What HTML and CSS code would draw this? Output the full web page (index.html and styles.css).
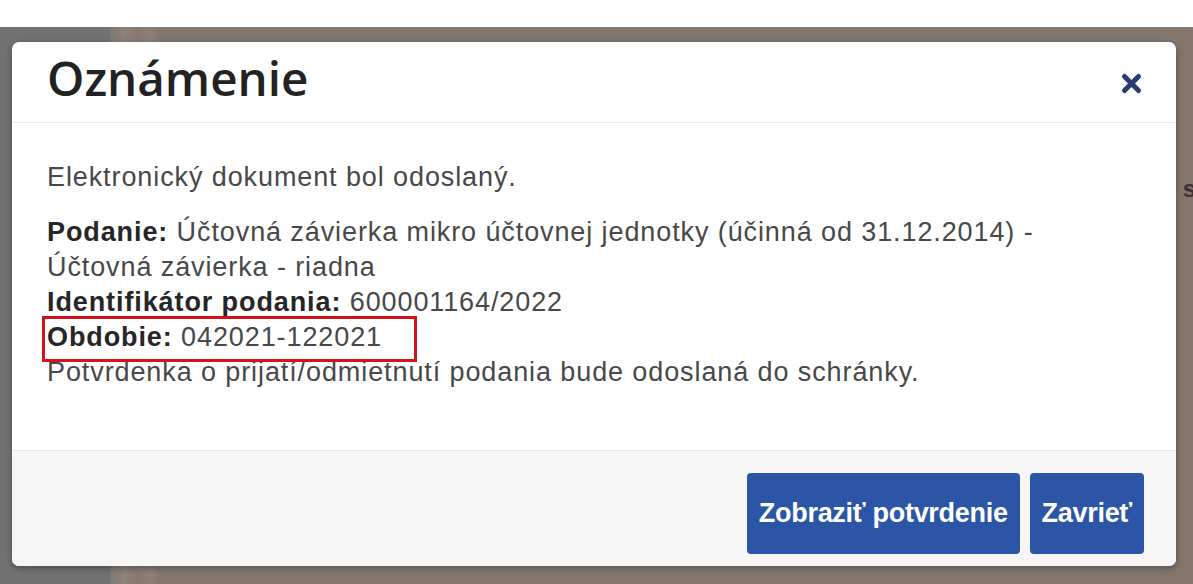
FILE: index.html
```html
<!DOCTYPE html>
<html lang="sk">
<head>
    <meta charset="UTF-8">
    <meta name="viewport" content="width=device-width, initial-scale=1.0">
    <title>Oznámenie</title>
    <link rel="stylesheet" href="styles.css">
</head>
<body>
    <div class="page-top"></div>
    <div class="backdrop">
        <div class="bg-side"></div>
        <div class="bg-edge"></div>
        <div class="bg-main"><span class="bg-letter">s</span></div>
    </div>

    <div class="modal">
        <div class="modal-header">
            <h1>Oznámenie</h1>
            <button type="button" class="close" aria-label="Zavrieť">
                <svg width="23" height="23" viewBox="0 0 23 23">
                    <path d="M4.5 4.5 L18.5 18.5 M18.5 4.5 L4.5 18.5" stroke="#2b3a73" stroke-width="5" stroke-linecap="round" fill="none"/>
                </svg>
            </button>
        </div>

        <div class="modal-body">
            <p>Elektronický dokument bol odoslaný.</p>
            <p>
                <b>Podanie:</b> Účtovná závierka mikro účtovnej jednotky (účinná od 31.12.2014) -<br>
                Účtovná závierka - riadna<br>
                <b>Identifikátor podania:</b> 600001164/2022<br>
                <span class="marked"><b>Obdobie:</b> 042021-122021</span><br>
                Potvrdenka o prijatí/odmietnutí podania bude odoslaná do schránky.
            </p>
        </div>

        <div class="modal-footer">
            <button type="button" class="btn">Zobraziť potvrdenie</button>
            <button type="button" class="btn">Zavrieť</button>
        </div>
    </div>
</body>
</html>
```

FILE: styles.css
```css
body {
    margin: 0;
    padding: 0;
    height: 584px;
    overflow: hidden;
    position: relative;
    display: flex;
    flex-direction: column;
    font-family: 'Liberation Sans', Arial, sans-serif;
    background: #fff;
}

.page-top {
    height: 27px;
    background: #fff;
}

/* page behind the dialog, darkened */
.backdrop {
    flex: 1;
    display: flex;
}

.bg-side {
    width: 110px;
    background: #727272;
}

.bg-edge {
    width: 50px;
    background: linear-gradient(90deg, #7d7975 0%, #8f8178 30%, #86786f 55%, #8c7f76 80%, #84766d 100%);
}

.bg-main {
    flex: 1;
    display: flex;
    justify-content: flex-end;
    align-items: flex-start;
    background: #83766d;
}

.bg-letter {
    margin-top: 148px;
    margin-right: -3px;
    font-size: 24px;
    font-weight: bold;
    color: #3a3330;
}

.modal {
    position: absolute;
    top: 42px;
    left: 12px;
    width: 1164px;
    background: #fff;
    border-radius: 7px;
    box-shadow: 0 2px 6px rgba(0, 0, 0, 0.35);
    overflow: hidden;
}

.modal-header {
    height: 80px;
    display: flex;
    align-items: center;
    justify-content: space-between;
    padding: 0 33px 0 35px;
    border-bottom: 1px solid #e8e8e8;
}

h1 {
    margin: 0 0 8px;
    font-family: 'Open Sans', sans-serif;
    font-weight: 600;
    font-size: 47.5px;
    line-height: 50px;
    color: #222;
}

.close {
    border: none;
    background: none;
    padding: 0;
    width: 23px;
    height: 23px;
    margin-top: 3px;
    cursor: pointer;
}

.close svg {
    display: block;
}

.modal-body {
    height: 290px;
    padding: 37px 35px 0;
    font-size: 27px;
    line-height: 35px;
    letter-spacing: 0.9px;
    color: #484848;
}

.modal-body p {
    margin: 0 0 20px;
}

.modal-body b {
    color: #262626;
}

.marked {
    position: relative;
}

/* red annotation frame */
.marked::after {
    content: '';
    position: absolute;
    left: -5px;
    top: -6px;
    width: 375px;
    height: 46px;
    box-sizing: border-box;
    border: 3px solid #d3131c;
}

.modal-footer {
    display: flex;
    justify-content: flex-end;
    gap: 10px;
    padding: 22px 32px 12px;
    background: #f6f6f6;
    border-top: 1px solid #e6e6e6;
}

.btn {
    height: 81px;
    padding: 0 12px;
    border: none;
    border-radius: 4px;
    background: #2c55a6;
    color: #fff;
    font-family: 'Liberation Sans', Arial, sans-serif;
    font-size: 27px;
    font-weight: bold;
    letter-spacing: -0.3px;
    cursor: pointer;
}
```
